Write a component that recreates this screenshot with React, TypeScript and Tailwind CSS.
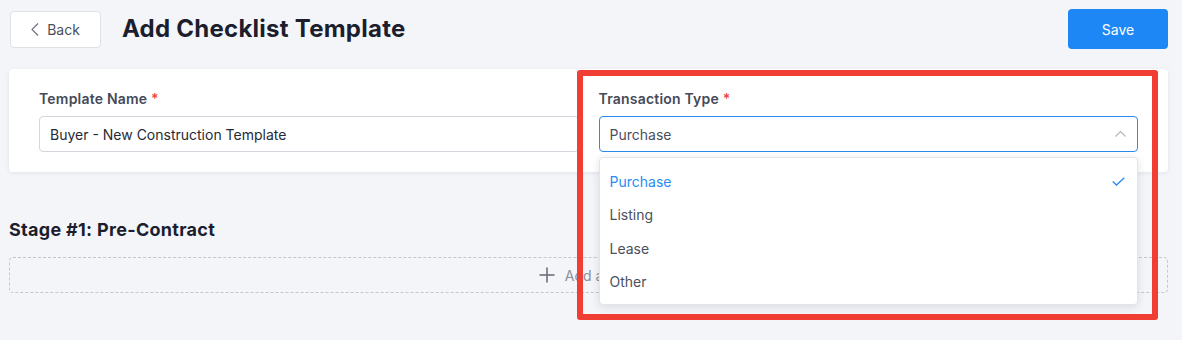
const options = ['Purchase', 'Listing', 'Lease', 'Other'];

export default function App() {
  const selected = 'Purchase';

  return (
    <div
      className="relative min-h-[340px] w-[1182px] bg-[#f4f5f9] pl-[9px] pr-[14px] pt-[9px] text-[#1d2030]"
      style={{ fontFamily: 'Inter, "Noto Sans", sans-serif' }}
    >
      {/* Header */}
      <div className="flex items-center">
        <button className="ml-px flex h-[37px] w-[91px] items-center justify-center gap-[8px] rounded-[4px] border border-[#dfe1e6] bg-white text-[14px] text-[#4b4f5c]">
          <svg width="8" height="13" viewBox="0 0 8 13" fill="none" stroke="#6b6f7a" strokeWidth="1.1">
            <polyline points="7,0.5 1,6.5 7,12.5" />
          </svg>
          <span>Back</span>
        </button>
        <h1 className="ml-[21px] text-[24px] font-bold tracking-[0.25px] text-[#1c1e2e]">Add Checklist Template</h1>
        <button className="ml-auto h-[40px] w-[100px] rounded-[4px] bg-[#1d87f5] text-[14px] text-white">Save</button>
      </div>

      {/* Template card */}
      <div className="mt-[20px] grid grid-cols-2 gap-[20px] rounded-[4px] bg-white px-[30px] pb-[20px] pt-[20px] shadow-[0_1px_4px_rgba(20,30,60,0.08)]">
        <div>
          <label className="block h-[20px] text-[14px] font-semibold leading-[20px] tracking-[0.2px] text-[#464a57]">
            Template Name <span className="text-[#ef4444]">*</span>
          </label>
          <div className="mt-[7px] flex h-[36px] items-center rounded-[4px] border border-[#d3d6dd] px-[10px] text-[14px] text-[#262a36]">
            Buyer - New Construction Template
          </div>
        </div>
        <div className="relative">
          <label className="block h-[20px] text-[14px] font-semibold leading-[20px] tracking-[0.2px] text-[#464a57]">
            Transaction Type <span className="text-[#ef4444]">*</span>
          </label>
          <div className="mt-[7px] flex h-[36px] items-center justify-between rounded-[4px] border border-[#2a8cf2] px-[10px] text-[14px] text-[#4b4f5c]">
            <span>Purchase</span>
            <svg width="11" height="6" viewBox="0 0 11 6" fill="none" stroke="#b3b6bd" strokeWidth="1.1" className="mr-[1px]">
              <polyline points="0.5,5.5 5.5,0.5 10.5,5.5" />
            </svg>
          </div>

          {/* Dropdown menu */}
          <div className="absolute left-0 right-0 top-[68px] z-10 rounded-[4px] border border-[#e3e5ea] bg-white pb-[6px] pt-[7px] shadow-[0_2px_8px_rgba(20,30,60,0.12)]">
            {options.map((opt) => (
              <div
                key={opt}
                className={`flex h-[33.3px] items-center justify-between px-[10px] text-[14px] ${
                  opt === selected ? 'text-[#2a8cf2]' : 'text-[#4b4f5c]'
                }`}
              >
                <span>{opt}</span>
                {opt === selected && (
                  <svg width="13" height="9" viewBox="0 0 13 9" fill="none" stroke="#2a8cf2" strokeWidth="1.4" className="mr-[2px]">
                    <polyline points="0.7,4.5 4.5,8 12.3,0.7" />
                  </svg>
                )}
              </div>
            ))}
          </div>
        </div>
      </div>

      {/* Stage */}
      <h2 className="mt-[46px] h-[24px] text-[18px] font-bold leading-[24px] tracking-[0.3px] text-[#1c1e2e]">Stage #1: Pre-Contract</h2>
      <div className="mt-[15px] flex h-[36px] items-center justify-center gap-[10px] rounded-[4px] border border-dashed border-[#c4c7ce] text-[14px] text-[#8a8e99]">
        <svg width="16" height="16" viewBox="0 0 16 16" fill="none" stroke="#6b6f7a" strokeWidth="1.6">
          <line x1="8" y1="0.5" x2="8" y2="15.5" />
          <line x1="0.5" y1="8" x2="15.5" y2="8" />
        </svg>
        <span>Add a Task</span>
      </div>

      {/* Highlight annotation */}
      <div className="pointer-events-none absolute left-[577px] top-[70px] z-20 h-[250px] w-[581px] rounded-[3px] border-[6px] border-[#f03e35]" />
    </div>
  );
}
